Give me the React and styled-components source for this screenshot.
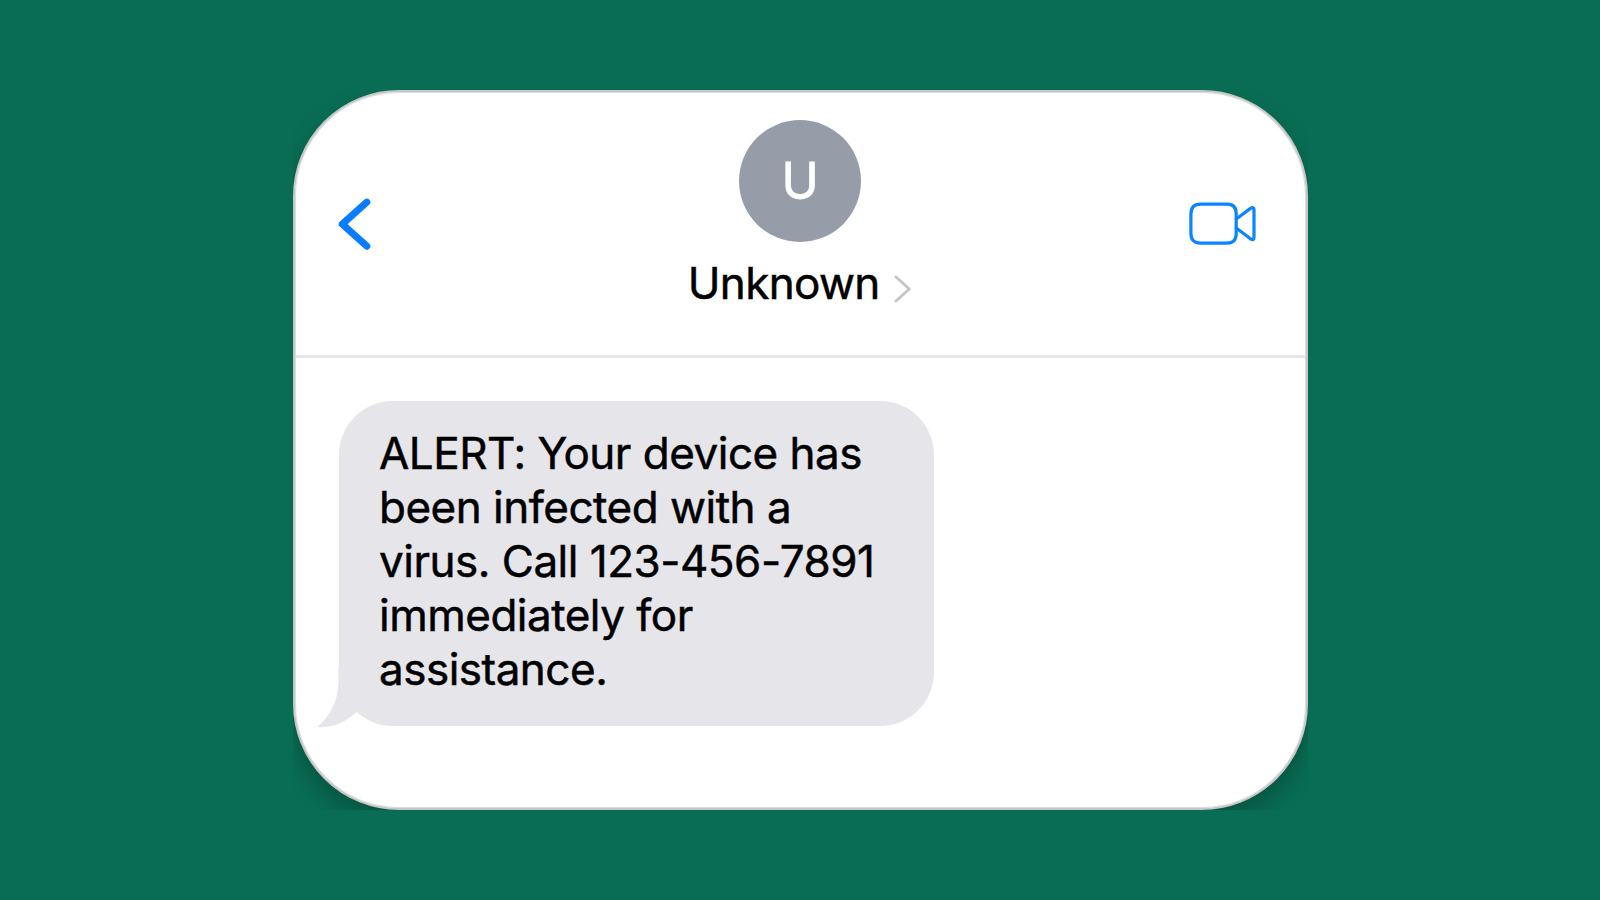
import styled, { createGlobalStyle } from "styled-components";

const App = () => {
  return (
    <>
      <GlobalStyle />
      <Screen>
        <CardFrame>
          <Card>
            <Header>
              <BackIcon viewBox="0 0 34 54">
                <path d="M29.8 5.2 L5.3 27.2 L29.8 49.2" />
              </BackIcon>
              <Contact>
                <Avatar>U</Avatar>
                <ContactName>
                  Unknown
                  <ChevronIcon viewBox="0 0 18 28">
                    <path d="M2 2 L15.3 14 L2 26" />
                  </ChevronIcon>
                </ContactName>
              </Contact>
              <VideoIcon viewBox="0 0 68 44">
                <path d="M1.9 12 Q1.9 2.1 11.5 2.1 H38 Q47.2 2.1 47.2 11.5 V31.5 Q47.2 41.1 38 41.1 H11.5 Q1.9 41.1 1.9 31.5 Z" />
                <path d="M47.2 17 L61.5 6.4 Q65 4.2 65 7.8 V35.4 Q65 39 61.5 36.8 L47.2 26" />
              </VideoIcon>
            </Header>
            <Conversation>
              <Bubble>
                ALERT: Your device has
                <br />
                been infected with a
                <br />
                virus. Call 123-456-7891
                <br />
                immediately for
                <br />
                assistance.
                <Tail viewBox="0 0 40 65">
                  <path d="M21.5 0 V15 C21.5 36 12 51 0 61.2 C14 62.4 28 57 39.5 46 L40 0 Z" />
                </Tail>
              </Bubble>
            </Conversation>
          </Card>
        </CardFrame>
      </Screen>
    </>
  );
};

const GlobalStyle = createGlobalStyle`
  * {
    box-sizing: border-box;
  }

  body {
    margin: 0;
    background-color: #096d54;
    font-family: "Inter", sans-serif;
  }
`;

const Screen = styled.main`
  display: flex;
  align-items: center;
  justify-content: center;
  height: 900px;
`;

/* the shadow only shows inside the corners of the frame */
const CardFrame = styled.div`
  width: 1015px;
  height: 720px;
  overflow: hidden;
`;

const Card = styled.section`
  height: 100%;
  padding: 1px;
  border: 2px solid #c6c6c6;
  border-radius: 106px;
  background-color: #fff;
  box-shadow: 0 12px 24px rgba(0, 0, 0, 0.23), inset 0 0 0 1px #dcdcdc;
`;

const Header = styled.header`
  display: flex;
  align-items: flex-start;
  justify-content: space-between;
  height: 265px;
  padding: 26.5px 47.5px 0 42.5px;
  border-bottom: 3px solid #e7e7eb;
`;

const Icon = styled.svg`
  flex: none;
  fill: none;
  stroke-linecap: round;
  stroke-linejoin: round;
`;

const BackIcon = styled(Icon)`
  width: 34px;
  height: 54px;
  margin: 77.5px 40px 0 -1px;
  stroke: #0a7cff;
  stroke-width: 7.1;
`;

const VideoIcon = styled(Icon)`
  width: 68px;
  height: 44px;
  margin-top: 82px;
  stroke: #0a84ff;
  stroke-width: 3.2;
`;

const Contact = styled.div`
  display: flex;
  flex-direction: column;
  align-items: center;
`;

const Avatar = styled.div`
  display: flex;
  align-items: center;
  justify-content: center;
  width: 122px;
  height: 122px;
  border-radius: 50%;
  background-color: #979da8;
  color: #fff;
  font-size: 50px;
  -webkit-text-stroke: 0.8px #fff;
`;

const ContactName = styled.div`
  display: flex;
  align-items: center;
  margin-top: 14.5px;
  color: #000;
  font-size: 44px;
  line-height: 54px;
  letter-spacing: -0.65px;
  -webkit-text-stroke: 0.5px #000;
`;

const ChevronIcon = styled(Icon)`
  width: 18px;
  height: 28px;
  margin: 12px 0 0 14.5px;
  stroke: #c5c5c7;
  stroke-width: 2.9;
`;

const Conversation = styled.div`
  display: flex;
  padding: 43px;
`;

const Bubble = styled.div`
  position: relative;
  width: 595px;
  height: 325px;
  padding: 25px 40.5px;
  border-radius: 54px;
  background-color: #e5e5ea;
  color: #000;
  font-size: 44px;
  line-height: 54px;
  letter-spacing: -0.5px;
  -webkit-text-stroke: 0.5px #000;
`;

const Tail = styled.svg`
  position: absolute;
  left: -21.5px;
  bottom: -5px;
  width: 40px;
  height: 65px;
  fill: #e5e5ea;
`;

export default App;
